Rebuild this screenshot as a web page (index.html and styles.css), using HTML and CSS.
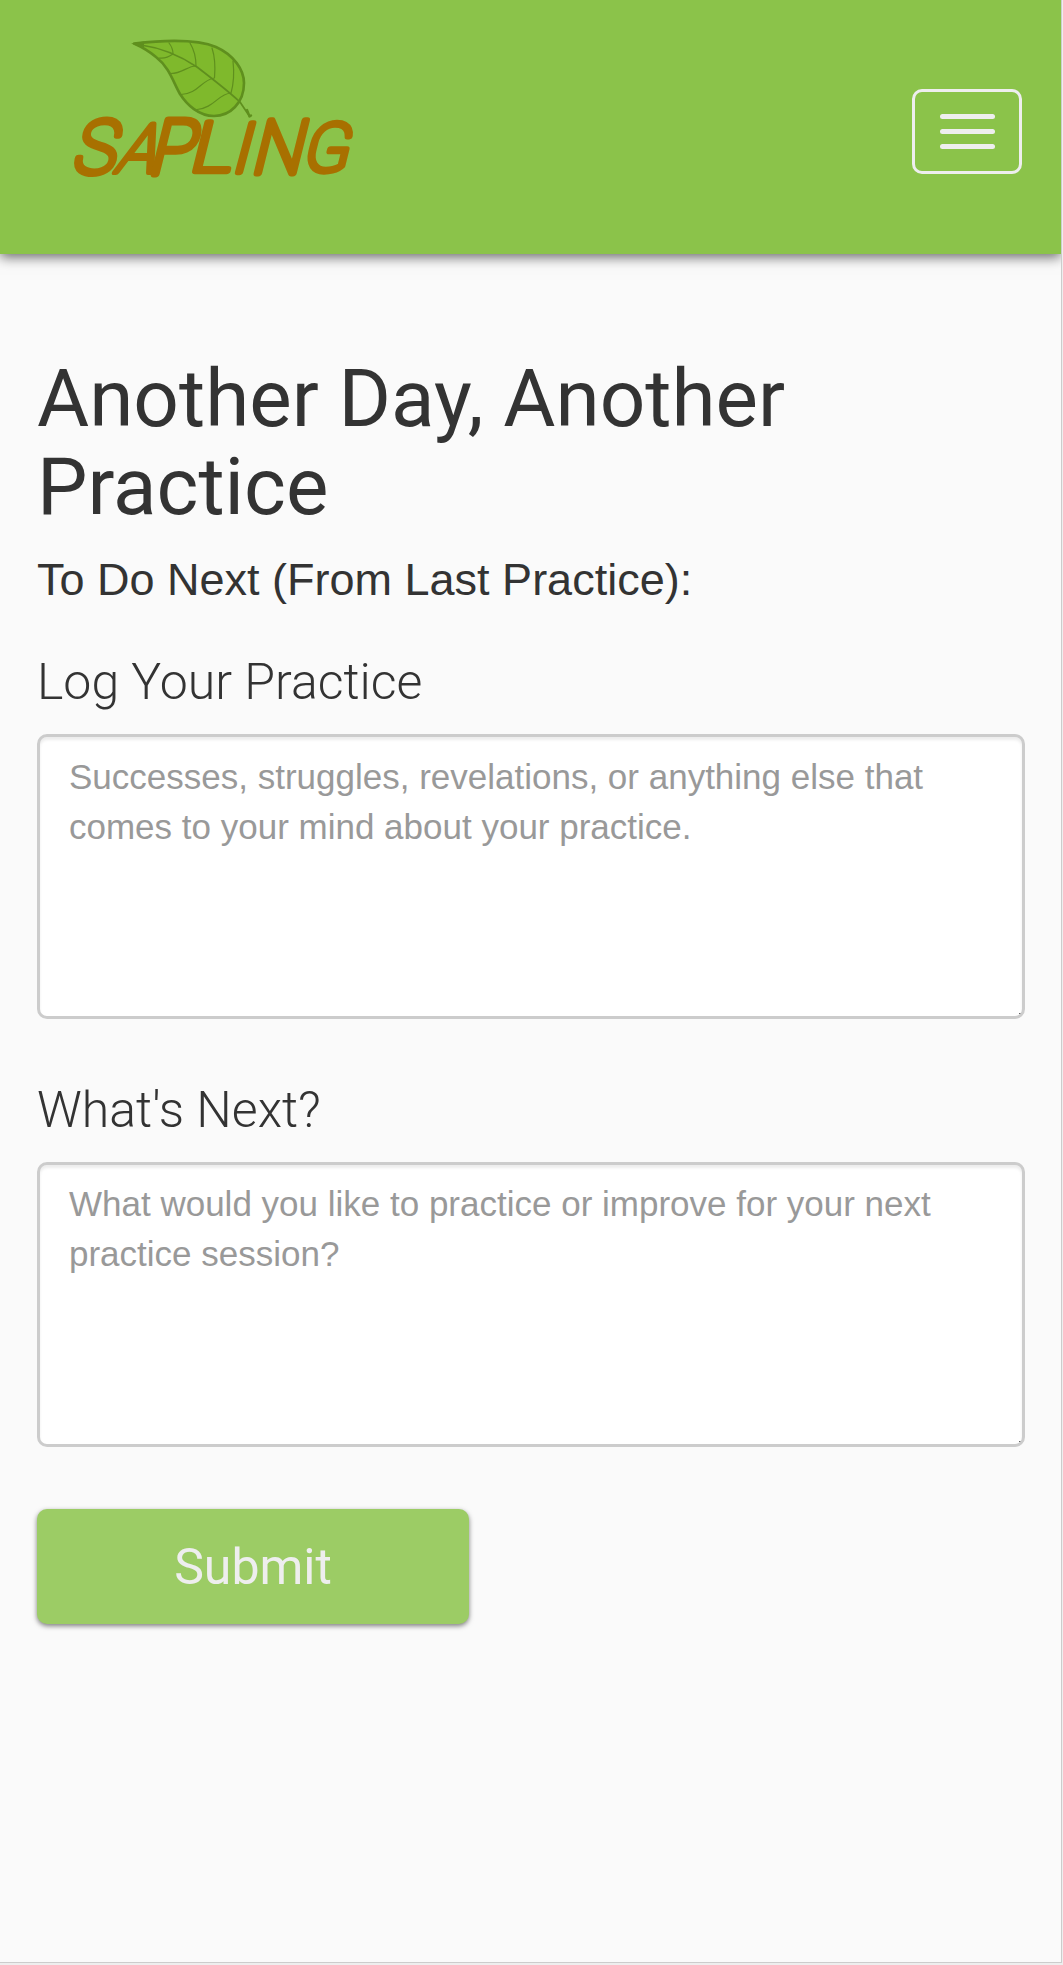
FILE: index.html
```html
<!DOCTYPE html>
<html lang="en">
<head>
<meta charset="utf-8">
<title>Sapling</title>
<link rel="stylesheet" href="styles.css">
</head>
<body>
<div class="page">
  <header class="navbar">
    <a class="brand" href="#" aria-label="Sapling">
      <svg class="logo" width="310" height="165" viewBox="0 0 310 165">
        <g class="leaf">
          <path class="leaf-blade" d="M74 18.5C105 15 137 14 156 22C174 30 184 45 184 58C184 78 170 91 154 91C139 91 127 80 120 69C113 57 110 43 96 32C90 27 82 22 74 18.5Z"/>
          <path class="leaf-tip" d="M71 18.5L84 16.5L84 23Z"/>
          <path class="leaf-stem" d="M81 20Q110 24 137 42Q167 65 180 77L188 89"/>
          <path class="leaf-vein" d="M109 18Q113 23 113 29Q106 34 99 33M130 18Q136 28 136 41C127 41 122 49 110 48.500M152 23Q156 35 154.500 53C141 55 138 69 121 69.500M173 36Q175 54 171 68C158 69 154 83 137 84.500"/>
          <path class="leaf-foot" d="M187 85L189.500 91.500L191 90.500"/>
        </g>
        <g class="wordmark">
          <text transform="translate(11 148) skewX(-14) scale(.94 .97)">S</text>
          <text transform="translate(54 147) skewX(-22) scale(.84 .88)">A</text>
          <text transform="translate(87 149) skewX(-14) scale(.98 1)">P</text>
          <text transform="translate(128 146) skewX(-14) scale(1.05 .9)">L</text>
          <text transform="translate(170 147) skewX(-15) scale(.92 .9)">I</text>
          <text transform="translate(190 148) skewX(-14) scale(.94 .97)">N</text>
          <text transform="translate(241 146) skewX(-14) scale(.88 .88)">G</text>
        </g>
      </svg>
    </a>
    <button class="toggle" type="button" aria-label="Menu">
      <span class="bar"></span><span class="bar"></span><span class="bar"></span>
    </button>
  </header>
  <main class="content">
    <h1 class="title">Another Day, Another Practice</h1>
    <h4 class="todo">To Do Next (From Last Practice):</h4>
    <form class="form">
      <label class="label" for="log">Log Your Practice</label>
      <textarea class="field" id="log" placeholder="Successes, struggles, revelations, or anything else that comes to your mind about your practice."></textarea>
      <label class="label" for="next">What's Next?</label>
      <textarea class="field field-next" id="next" placeholder="What would you like to practice or improve for your next practice session?"></textarea>
      <button class="submit" type="button">Submit</button>
    </form>
  </main>
</div>
</body>
</html>
```
FILE: styles.css
```css
* { box-sizing: border-box; }

body {
  margin: 0;
  background: #eee;
  color: #333;
  font-family: "Liberation Sans", Arial, sans-serif;
}

.page {
  width: 1062px;
  height: 1963px;
  overflow: hidden;
  background: #fafafa;
  border-right: 1px solid #ccc;
  border-bottom: 1px solid #ccc;
}

.navbar {
  display: flex;
  justify-content: space-between;
  align-items: flex-start;
  height: 254px;
  padding: 25px 39px 0 60px;
  background: #8bc34a;
  box-shadow: 0 3px 12px rgba(0, 0, 0, .6);
}

.logo { display: block; overflow: visible; }
.leaf { fill: none; stroke: #5f8f1e; stroke-linecap: round; stroke-linejoin: round; }
.leaf-blade { fill: #7fb92c; stroke-width: 2.6; }
.leaf-tip { fill: #5f8f1e; stroke: none; }
.leaf-stem { stroke-width: 1.7; }
.leaf-vein { stroke-width: 1.2; }
.leaf-foot { stroke-width: 2.4; }

.wordmark {
  fill: #a87000;
  stroke: #a87000;
  stroke-width: 7;
  stroke-linejoin: round;
  stroke-linecap: round;
  font: 100 76px Roboto, sans-serif;
}

.toggle {
  display: flex;
  flex-direction: column;
  justify-content: center;
  align-items: center;
  gap: 10px;
  width: 110px;
  height: 85px;
  margin: 64px 0 0;
  padding: 0 0 0 1px;
  border: 3px solid #eee;
  border-radius: 10px;
  background: none;
}

.bar {
  width: 55px;
  height: 5px;
  border-radius: 2.5px;
  background: #eee;
}

.content { padding: 101px 36px 0 37px; }

.title {
  margin: 0;
  font: 400 80px/88px Roboto, sans-serif;
}

.todo {
  margin: 24px 0 50px;
  font-size: 45px;
  font-weight: 400;
  line-height: 50px;
}

.form { display: flex; flex-direction: column; }

.label {
  margin-bottom: 24px;
  font: 300 50px/55px Roboto, sans-serif;
}

.field {
  height: 285px;
  margin: 0 0 64px;
  padding: 15px 29px;
  border: 3px solid #ccc;
  border-radius: 10px;
  background: linear-gradient(#666, #666) right 1px bottom 2px / 2px 1px no-repeat #fff;
  box-shadow: inset 0 3px 3px rgba(0, 0, 0, .075);
  color: #555;
  font: 35px/50px "Liberation Sans", Arial, sans-serif;
  overflow: hidden;
  resize: none;
}

.field-next { padding-top: 14px; }

.field::placeholder { color: #999; opacity: 1; }

.submit {
  width: 432px;
  height: 115px;
  margin-top: -2px;
  padding: 0;
  border: 0;
  border-radius: 10px;
  background: #9ccc65;
  box-shadow: 0 2px 5px rgba(0, 0, 0, .5);
  color: #eee;
  font: 400 50px/1 Roboto, sans-serif;
}
```
